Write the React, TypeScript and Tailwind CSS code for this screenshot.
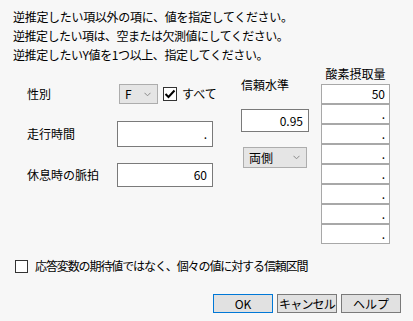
import { Fragment } from 'react'

const font = { fontFamily: '"Noto Sans CJK JP", "Noto Sans", sans-serif' }

function Chevron() {
  return (
    <svg width="7" height="5" viewBox="0 0 7 5" className="shrink-0">
      <path d="M0.5 0.8 L3.5 3.8 L6.5 0.8" fill="none" stroke="#8a8a8a" strokeWidth="1" />
    </svg>
  )
}

function Select({ value, className }: { value: string; className: string }) {
  return (
    <div className={`flex items-center justify-between border border-[#adadad] bg-[#e5e5e5] pl-[5px] pr-[6px] ${className}`}>
      <span>{value}</span>
      <Chevron />
    </div>
  )
}

function Field({ value, className }: { value: string; className: string }) {
  return (
    <div className={`flex items-center justify-end border border-[#7a7a7a] bg-white pr-[5px] ${className}`}>
      {value}
    </div>
  )
}

const cells = ['50', '.', '.', '.', '.', '.', '.', '.']

export default function App() {
  return (
    <div className="w-[413px] h-[321px] bg-[#f7f7f7] text-[12px] text-black overflow-hidden" style={font}>
      <div className="h-[62px] pl-[13px] pt-[7px] leading-[19px]">
        <div className="tracking-[-0.3px]">逆推定したい項以外の項に、値を指定してください。</div>
        <div className="tracking-[-0.5px]">逆推定したい項は、空または欠測値にしてください。</div>
        <div className="tracking-[-0.4px]">逆推定したいY値を1つ以上、指定してください。</div>
      </div>

      <div className="flex items-start">
        {/* left column */}
        <div className="ml-[27px] w-[186px] shrink-0 whitespace-nowrap">
          <div className="mt-[22px] flex items-center h-[20px]">
            <span className="w-[92px] shrink-0 leading-[16px]">性別</span>
            <Select value="F" className="w-[39px] h-[20px] shrink-0" />
            <div className="ml-[5px] w-[14px] h-[14px] shrink-0 border border-[#333] bg-white flex items-center justify-center">
              <svg width="12" height="10" viewBox="0 0 12 10">
                <path d="M1.5 5 L4.5 8 L10.5 1.5" fill="none" stroke="#000" strokeWidth="2" />
              </svg>
            </div>
            <span className="ml-[5px]">すべて</span>
          </div>
          <div className="mt-[17px] flex items-center">
            <span className="w-[90px] shrink-0">走行時間</span>
            <Field value="." className="w-[96px] h-[26px] shrink-0" />
          </div>
          <div className="mt-[16px] flex items-center">
            <span className="w-[90px] shrink-0">休息時の脈拍</span>
            <Field value="60" className="w-[96px] h-[24px] shrink-0" />
          </div>
        </div>

        {/* confidence column */}
        <div className="ml-[28px] w-[68px] shrink-0">
          <div className="mt-[15px] leading-[16px]">信頼水準</div>
          <Field value="0.95" className="mt-[16px] w-[68px] h-[23px]" />
          <Select value="両側" className="mt-[15px] ml-[2px] w-[64px] h-[21px]" />
        </div>

        {/* response column */}
        <div className="ml-[12px] w-[69px] shrink-0">
          <div className="mt-[4px] h-[18px] leading-[16px] text-center">酸素摂取量</div>
          <div className="flex flex-col">
            {cells.map((v, i) => (
              <Fragment key={i}>
                <div className="h-[20px] border border-[#a8a8a8] bg-white flex items-center justify-end pr-[4px] leading-none">
                  {v}
                </div>
              </Fragment>
            ))}
          </div>
        </div>
      </div>

      <div className="mt-[15px] ml-[15px] flex items-center h-[14px]">
        <div className="w-[13px] h-[13px] border border-[#333] bg-white" />
        <span className="ml-[7px] tracking-[-1.1px]">応答変数の期待値ではなく、個々の値に対する信頼区間</span>
      </div>

      <div className="mt-[21px] pr-[12px] flex justify-end gap-[4px]">
        <button className="w-[60px] h-[19px] border border-[#0078d7] bg-[#e1e1e1] leading-none">OK</button>
        <button className="w-[60px] h-[19px] border border-[#7a7a7a] bg-[#e1e1e1] leading-none tracking-[-0.8px]">キャンセル</button>
        <button className="w-[60px] h-[19px] border border-[#7a7a7a] bg-[#e1e1e1] leading-none">ヘルプ</button>
      </div>
    </div>
  )
}
